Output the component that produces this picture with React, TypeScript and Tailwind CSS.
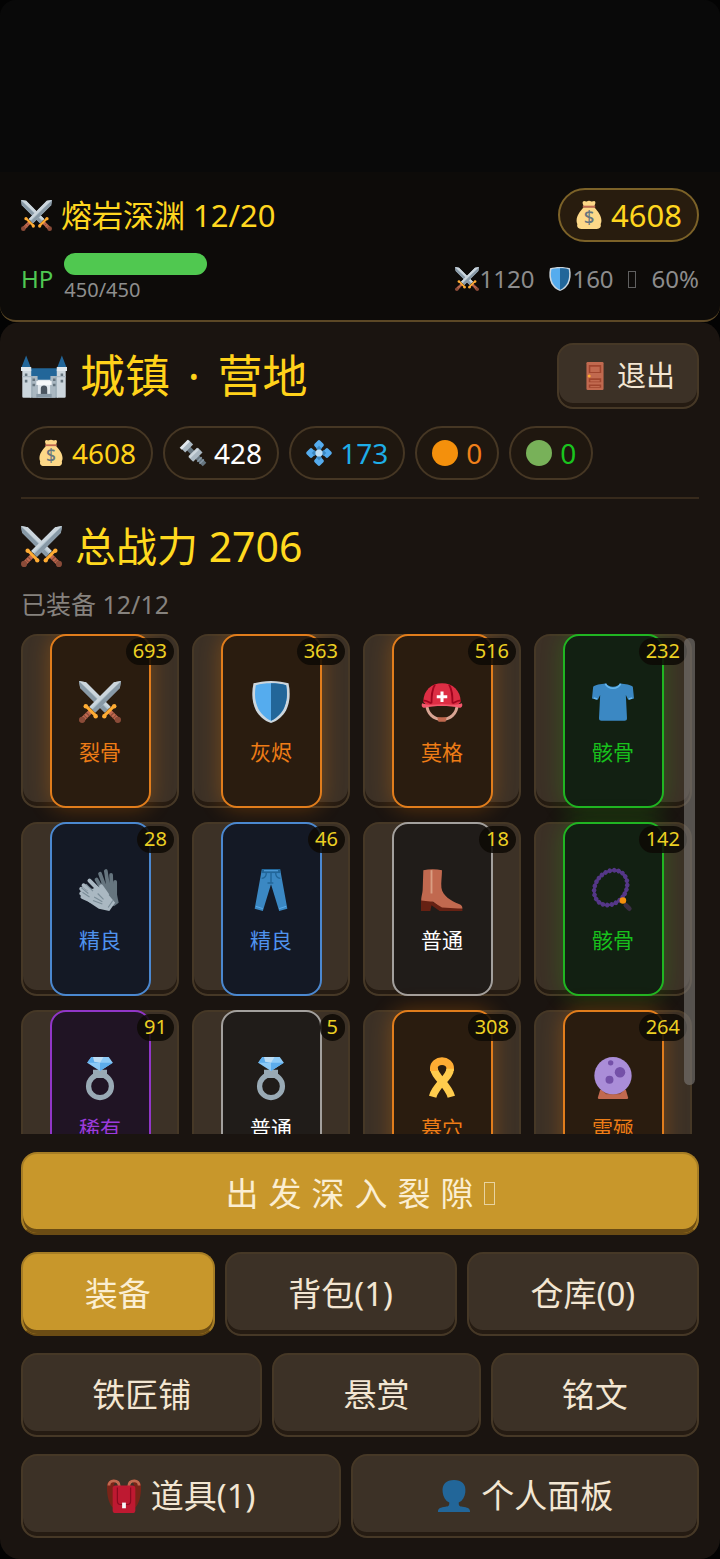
import React from 'react'
import clsx from 'clsx'

type IconName =
  | 'swords' | 'bag' | 'shield' | 'castle' | 'door' | 'bolt' | 'gem' | 'orange' | 'green'
  | 'helmet' | 'shirt' | 'gloves' | 'jeans' | 'boot' | 'beads' | 'ring' | 'ribbon' | 'crystal'
  | 'backpack' | 'person'

const sword = (
  <>
    <path fill="#B5C7D1" d="M36 0l-6 1L9 22l5 5L35 6z" />
    <path fill="#8899A6" d="M36 0L11.500 24.500 14 27 35 6z" />
    <path fill="#CCD6DD" d="M36 0l-6 1-21 21 1.500 1.500z" />
    <path stroke="#C1694F" strokeWidth="4" d="M10 26l-6.500 6.500" />
    <path stroke="#8A4B38" strokeWidth="1" d="M6 27l3 3M4 29l3 3" />
    <circle cx="2.700" cy="33.300" r="2.700" fill="#8A4B38" />
    <path stroke="#FFAC33" strokeWidth="2.600" strokeLinecap="round" d="M6.500 22l7.500 7.500" />
    <circle cx="5.800" cy="21.700" r="1.900" fill="#FFAC33" />
    <circle cx="14.300" cy="30.200" r="1.900" fill="#FFAC33" />
  </>
)

const ring = (
  <>
    <circle cx="18" cy="25" r="9.800" fill="none" stroke="#99AAB5" strokeWidth="4.500" />
    <path fill="#99AAB5" d="M12 11h12v4l-2 3h-8l-2-3z" />
    <path fill="#8CCAF7" d="M10.500 0h15L29 5 18 12 7 5z" />
    <path fill="#5DADEC" d="M10.500 0L7 5h11V0zM18 5v7l11-7z" />
    <path fill="#BDDDF4" d="M12 0h9l-3 5-5-1z" />
  </>
)

const petal = (
  <>
    <rect x="12.500" y="1.500" width="11" height="11" rx="2.500" fill="#55ACEE" transform="rotate(45 18 7)" />
    <path fill="#3B88C3" d="M18 8l4 4-4 4-4-4z" />
  </>
)

const glyphs: Record<IconName, React.ReactNode> = {
  swords: (
    <>
      <g transform="matrix(-1 0 0 1 36 0)">{sword}</g>
      {sword}
    </>
  ),
  bag: (
    <>
      <path fill="#FDD888" d="M11 8h14c1 2 9 9 9 17 0 3-1 4-1 5 1 3-1 6-5 6H8c-4 0-6-3-5-6 0-1-1-2-1-5C2 17 10 10 11 8z" />
      <path fill="#FDD888" d="M10 1c2-2 3 0 5-.500 2-1 4-1 6 0C23 1 25-1 26 1c1 2-1 4-1 6H11c0-2-2-4-1-6z" />
      <path fill="#BF6952" d="M10 6h16v2.500H10z" />
      <text x="18" y="30" textAnchor="middle" fontSize="24" fontWeight="500" fill="#67757F" fontFamily="Noto Sans, sans-serif">$</text>
    </>
  ),
  shield: (
    <>
      <path fill="#CCD6DD" d="M18 0c6 0 11 1 15 2 2 9 1 17-2 23-3 5-7 9-13 11C12 34 8 30 5 25 2 19 1 11 3 2 7 1 12 0 18 0z" />
      <path fill="#55ACEE" d="M18 2c5 0 9 .500 13 1.600 1.500 8 .500 14-2 20C26.500 28 23 32 18 34 13 32 9.500 28 7 23.600 4.500 18 3.500 12 5 3.600 9 2.500 13 2 18 2z" />
      <path fill="#226699" d="M18 2c5 0 9 .500 13 1.600 1.500 8 .500 14-2 20C26.500 28 23 32 18 34z" />
    </>
  ),
  castle: (
    <>
      <path fill="#99AAB5" d="M7 14h22v21H7z" />
      <path fill="#226699" d="M7 12h22l1 6H6z" />
      <path fill="#CCD6DD" d="M1 13h7v22H2a1 1 0 0 1-1-1zM28 13h7v21a1 1 0 0 1-1 1h-6z" />
      <path fill="#E1E8ED" d="M0 11h8v3H0zM28 11h8v3h-8zM13 20h10v15H13z" />
      <path fill="#AAB8C2" d="M1 18h7v1H1zM28 18h7v1h-7zM9 18h4v17H9zM23 18h4v17h-4z" />
      <path fill="#226699" d="M4 2l3.500 9h-7zM32 2l3.500 9h-7zM13 18h10v3H13z" />
      <path fill="#F5F8FA" d="M12 22h12v3H12z" />
      <path fill="#66757F" d="M3 16h2v2H3zM3 21h2v2H3zM31 16h2v2h-2zM31 21h2v2h-2zM9 20h2v2H9zM25 20h2v2h-2zM9 24h2v2H9zM25 24h2v2h-2z" />
      <path fill="#4a5560" d="M15.500 33v-5a2.500 2.500 0 0 1 5 0v5z" />
      <path fill="#8899A6" d="M12 32h12v3H12z" />
    </>
  ),
  door: (
    <>
      <rect x="7" y="0" width="22" height="36" rx="1.500" fill="#C1694F" />
      <path fill="#A0452E" d="M10 4h16v10H10zM10 21h16v5H10zM10 29h16v4H10z" />
      <path fill="#C1694F" d="M12 6h12v7H12zM12 23h12v2H12zM12 31h12v1H12z" />
      <circle cx="10.500" cy="18" r="2" fill="#FFAC33" />
    </>
  ),
  bolt: (
    <>
      <path stroke="#66757F" strokeWidth="7" d="M8 8l26 26" />
      <path stroke="#8899A6" strokeWidth="2" d="M24 30l6-6M27 33l6-6M20 26l5-5" />
      <path stroke="#AAB8C2" strokeWidth="9" strokeLinejoin="round" d="M4 14L15 3" />
      <path stroke="#E1E8ED" strokeWidth="4" d="M1 12L12 1" />
      <path stroke="#AAB8C2" strokeWidth="9" d="M15 27l13-13" />
      <path stroke="#CCD6DD" strokeWidth="4" d="M13 24l12-12" />
    </>
  ),
  gem: (
    <>
      {petal}
      <g transform="rotate(90 18 18)">{petal}</g>
      <g transform="rotate(180 18 18)">{petal}</g>
      <g transform="rotate(270 18 18)">{petal}</g>
      <circle cx="18" cy="18" r="5" fill="#BDDDF4" />
    </>
  ),
  orange: <circle cx="18" cy="18" r="18" fill="#F4900C" />,
  green: <circle cx="18" cy="18" r="18" fill="#78B159" />,
  helmet: (
    <>
      <path fill="none" stroke="#D8A493" strokeWidth="2.500" d="M5 20c0 8 6 13 13 13s13-5 13-13" />
      <path fill="#C1694F" d="M14 31h8l-1 4h-6z" />
      <path fill="#DD2E44" d="M2 18C2 8 9 2 18 2s16 6 16 16l-3 3H5z" />
      <path fill="none" stroke="#A0041E" strokeWidth="1.500" d="M12 3c-3 5-3 10-3 16M24 3c3 5 3 10 3 16M2 17c3-1 5 2 7 2M34 17c-3-1-5 2-7 2" />
      <path fill="#F4576C" d="M1 19c5 2 11 1 17 1s12 1 17-1c1 2 0 4-2 4-9-2-21-2-30 0-2 0-3-2-2-4z" />
      <path stroke="#fff" strokeWidth="2.600" d="M18 9v9M13.500 13.500h9" />
    </>
  ),
  shirt: (
    <>
      <path fill="#3B88C3" d="M12 2c2 4 10 4 12 0 5 1 9 1 11 3l1 10-5 1-2-4 1 20c0 2-1 2-2 2H8c-1 0-2 0-2-2l1-20-2 4-5-1L1 5c2-2 6-2 11-3z" />
      <path fill="none" stroke="#66B7EE" strokeWidth="1.400" d="M11.500 2.500c2.500 5 10.500 5 13 0M1.500 14.500l3 1M34.500 14.500l-3 1" />
    </>
  ),
  gloves: (
    <>
      <path fill="#66757F" d="M16 12l10 1 6 6 2 10-4 3-9-6z" />
      <path stroke="#66757F" strokeWidth="3.200" strokeLinecap="round" d="M19 16l-4-7M22 15L18 4M25 15L23 1.700M28 18l-.500-13M31 23V11" />
      <path fill="#AAB8C2" d="M5 20l11-5 10 8 5 6-5 7-9-2-9-6z" />
      <path stroke="#AAB8C2" strokeWidth="3.500" strokeLinecap="round" d="M12 20l-8-6M10 23l-8-6M10 26l-8-5M12 28l-9-4M17 18l-8-8M24 22l-5-7" />
      <path stroke="#7B8D98" d="M8 21l-6-5M9 24l-6-4M12 19l-6-6M12 27l8 3M13 24l7 4M16 21l5 5M25 33l4-6" />
    </>
  ),
  jeans: (
    <>
      <path fill="#3B88C3" d="M10 1h16l6 33-7 2-7-23-7 23-7-2z" />
      <path fill="#226699" d="M10 0h16v3.500H10z" />
      <path fill="none" stroke="#226699" strokeWidth="1.200" d="M18 3v9M10 8c3 0 4-2 4-5M26 8c-3 0-4-2-4-5M15 12h5" />
      <path stroke="#5DADEC" strokeWidth=".8" d="M5 32l6 2M31 32l-6 2M12 1.500h12" />
    </>
  ),
  boot: (
    <>
      <path fill="#C1694F" d="M2 1c5-1 11-1 16 0 0 5-1 11-.500 15 1 7 8 11 15 14 3 1 3 3 3 4l-17 1-8-7-10 1c-1-5 1-7 1-13z" />
      <path fill="#662113" d="M0 27l10 1 8 5 17.500 1v2H16l-7-5-1 5H0z" />
      <path stroke="#D99E82" strokeWidth="1.600" d="M9 1v20" />
    </>
  ),
  beads: (
    <>
      <ellipse cx="16" cy="16" rx="13" ry="16" transform="rotate(38 16 16)" fill="none" stroke="#553788" strokeWidth="4" strokeLinecap="round" strokeDasharray="0 3.800" />
      <ellipse cx="16" cy="16" rx="13" ry="16" transform="rotate(38 16 16)" fill="none" stroke="#553788" strokeWidth="2" />
      <path stroke="#3A2E45" strokeWidth="4" strokeLinecap="round" d="M29 31l3 3" />
      <circle cx="26.500" cy="27" r="2.800" fill="#F4900C" />
    </>
  ),
  ring,
  ribbon: (
    <>
      <path stroke="#FFCC4D" strokeWidth="6.500" d="M11 9c0 8 12 14 15 25" />
      <path stroke="#FFAC33" strokeWidth="6.500" d="M11 12V9.500a7 6 0 0 1 14 0V12" />
      <path stroke="#FFCC4D" strokeWidth="6.500" d="M25 10c0 8-12 13-15 24" />
    </>
  ),
  crystal: (
    <>
      <path fill="#C1694F" d="M7 28h22l2 7c0 1-1 1-1 1H6s-1 0-1-1z" />
      <path fill="#8A4B38" d="M8 28h20l-4 4H12z" />
      <circle cx="18" cy="16" r="16" fill="#AA8DD8" />
      <circle cx="24" cy="13" r="4.500" fill="#7450A8" />
      <circle cx="15" cy="19.500" r="3.400" fill="#7450A8" />
      <circle cx="16" cy="5" r="2.300" fill="#7450A8" />
    </>
  ),
  backpack: (
    <>
      <path fill="#7A2418" d="M9 1C3 0 0 3 0 9c0 9 2 18 7 22V8zM27 1c6-1 9 2 9 8 0 9-2 18-7 22V8z" />
      <path fill="none" stroke="#C1694F" strokeWidth="3" d="M13 8c0-4-2-6-6-6-3 0-5 2-5 5M23 8c0-4 2-6 6-6 3 0 5 2 5 5" />
      <path fill="#BE1931" d="M9 7h18c2 0 3 1 3 3v23c0 2-1 3-3 3H9c-2 0-3-1-3-3V10c0-2 1-3 3-3z" />
      <path fill="none" stroke="#8C0A20" strokeWidth="1.300" d="M11 9v14c0 3 1 4 3 4h8c2 0 3-1 3-4V9" />
      <path fill="#F5F8FA" d="M16 25h4v6h-4z" />
    </>
  ),
  person: (
    <path fill="#226699" d="M18 1c8 0 13 4 12 13-.500 5-3 9-7 11 0 4 1 4 4 4.500 5 1 8 1 8 5.500H1c0-4.500 3-4.500 8-5.500 3-.500 4-.500 4-4.500-4-2-6.500-6-7-11C5 5 10 1 18 1z" />
  ),
}

function Icon({ name, className }: { name: IconName; className: string }) {
  return (
    <svg viewBox="0 0 36 36" fill="none" aria-hidden="true" className={clsx('shrink-0 overflow-visible', className)}>
      {glyphs[name]}
    </svg>
  )
}

type Rarity = 'orange' | 'green' | 'blue' | 'purple' | 'white'

const rarityStyles: Record<Rarity, string> = {
  orange: 'border-[#e17d1c] bg-[#2a1c0f] text-[#ee7c16] shadow-[0_0_22px_rgba(255,128,0,0.3)]',
  green: 'border-[#20b522] bg-[#122012] text-[#18c01c] shadow-[0_0_22px_rgba(30,200,0,0.25)]',
  blue: 'border-[#4b88d0] bg-[#141925] text-[#4f93ee]',
  purple: 'border-[#9136c8] bg-[#201424] text-[#9c3bdc]',
  white: 'border-[#a3a09d] bg-[#201c19] text-white',
}

const equipment: { icon: IconName; label: string; power: number; rarity: Rarity }[] = [
  { icon: 'swords', label: '裂骨', power: 693, rarity: 'orange' },
  { icon: 'shield', label: '灰烬', power: 363, rarity: 'orange' },
  { icon: 'helmet', label: '莫格', power: 516, rarity: 'orange' },
  { icon: 'shirt', label: '骸骨', power: 232, rarity: 'green' },
  { icon: 'gloves', label: '精良', power: 28, rarity: 'blue' },
  { icon: 'jeans', label: '精良', power: 46, rarity: 'blue' },
  { icon: 'boot', label: '普通', power: 18, rarity: 'white' },
  { icon: 'beads', label: '骸骨', power: 142, rarity: 'green' },
  { icon: 'ring', label: '稀有', power: 91, rarity: 'purple' },
  { icon: 'ring', label: '普通', power: 5, rarity: 'white' },
  { icon: 'ribbon', label: '墓穴', power: 308, rarity: 'orange' },
  { icon: 'crystal', label: '雷殛', power: 264, rarity: 'orange' },
]

const currencies: { icon: IconName; amount: number; color: string }[] = [
  { icon: 'bag', amount: 4608, color: 'text-[#ffd21a]' },
  { icon: 'bolt', amount: 428, color: 'text-white' },
  { icon: 'gem', amount: 173, color: 'text-[#1eaee8]' },
  { icon: 'orange', amount: 0, color: 'text-[#f0801a]' },
  { icon: 'green', amount: 0, color: 'text-[#1ac41e]' },
]

const menuRows: { label: string; icon?: IconName; active?: boolean }[][] = [
  [{ label: '装备', active: true }, { label: '背包(1)' }, { label: '仓库(0)' }],
  [{ label: '铁匠铺' }, { label: '悬赏' }, { label: '铭文' }],
  [{ label: '道具(1)', icon: 'backpack' }, { label: '个人面板', icon: 'person' }],
]

const darkButton = 'border-2 border-[#463826] bg-[#3c3126] text-[#f3e6d2] shadow-[inset_0_-4px_0_#251b12]'
const goldButton = 'border-2 border-[#a67d25] border-b-[#6b4c14] bg-[#c8972b] text-[#fbeed2] shadow-[inset_0_-4px_0_#6b4c14]'

function EmptyGlyph({ className }: { className: string }) {
  return <span aria-hidden="true" className={clsx('inline-block border', className)} />
}

function Slot({ icon, label, power, rarity }: (typeof equipment)[number]) {
  return (
    <button type="button" className={clsx('relative flex h-[174px] justify-center rounded-[16px]', darkButton)}>
      <span
        className={clsx(
          '-my-[2px] flex w-[101px] flex-col items-center justify-center gap-3 self-stretch rounded-[16px] border-2 pt-2',
          rarityStyles[rarity],
        )}
      >
        <Icon name={icon} className="size-[42px]" />
        <span className="text-[21px] leading-[34px]">{label}</span>
      </span>
      <span className="absolute top-[2px] right-[3px] h-[27px] rounded-full bg-[#0d0905]/85 px-[7px] text-[20px] leading-[26px] text-[#ecd023]">
        {power}
      </span>
    </button>
  )
}

export default function App() {
  return (
    <div className="flex h-screen flex-col bg-[#030303] font-['Noto_Sans','Noto_Sans_CJK_SC',sans-serif] font-normal">
      <header className="rounded-[16px] border-b-2 border-[#5c4826] bg-[linear-gradient(#090909_172px,#0d0b09_172px)] px-[21px] pt-[188px] pb-[15px]">
        <div className="flex items-center justify-between">
          <div className="flex items-center gap-[9px] text-[31px] leading-[54px] text-[#ffd61f]">
            <Icon name="swords" className="size-[31px]" />
            <span>熔岩深渊 12/20</span>
          </div>
          <div className="flex h-[54px] items-center gap-2 rounded-full border-2 border-[#7c6228] bg-[#281c0e] px-[15px] text-[31px] text-[#ffd61f]">
            <Icon name="bag" className="size-[28px]" />
            <span>4608</span>
          </div>
        </div>
        <div className="mt-[11px] flex items-center justify-between">
          <div className="flex items-center gap-[11px]">
            <span className="text-[24px] text-[#4fc752]">HP</span>
            <div>
              <div className="h-[22px] w-[143px] rounded-full bg-[#50c850]" />
              <div className="text-[20px] leading-[30px] text-[#8e8e8e]">450/450</div>
            </div>
          </div>
          <div className="flex items-center gap-[14px] text-[24px] text-[#8c8c8c]">
            <span className="flex items-center"><Icon name="swords" className="size-[24px]" />1120</span>
            <span className="flex items-center"><Icon name="shield" className="size-[24px]" />160</span>
            <span className="flex items-center gap-[16px]"><EmptyGlyph className="h-[17px] w-[8px] border-[#606060]" />60%</span>
          </div>
        </div>
      </header>

      <main className="flex min-h-0 flex-1 flex-col rounded-[20px] bg-[#1a1410] p-[21px]">
        <div className="flex items-center justify-between">
          <h1 className="flex items-center gap-[13px] text-[45px] leading-[66px] text-[#ffd21a]">
            <Icon name="castle" className="size-[46px]" />
            <span>城镇 <span className="mx-[6px]">·</span> 营地</span>
          </h1>
          <button type="button" className={clsx('flex h-[66px] items-center gap-2 rounded-[16px] px-[22px] text-[29px]', darkButton)}>
            <Icon name="door" className="size-[28px]" />
            退出
          </button>
        </div>

        <div className="mt-[17px] flex gap-[10px] border-b-2 border-[#372a1c] pb-[17px]">
          {currencies.map(({ icon, amount, color }) => (
            <div key={icon} className="flex h-[54px] items-center gap-2 rounded-full border-2 border-[#463724] bg-[#1f170f] px-[15px] text-[28px]">
              <Icon name={icon} className="size-[26px]" />
              <span className={color}>{amount}</span>
            </div>
          ))}
        </div>

        <h2 className="mt-[17px] flex items-center gap-[13px] text-[41px] leading-[60px] text-[#ffd91f]">
          <Icon name="swords" className="size-[41px]" />
          总战力 2706
        </h2>
        <p className="mt-[9px] text-[25px] leading-[38px] text-[#86827e]">已装备 12/12</p>

        <section className="relative mt-[11px] mb-[18px] min-h-0 flex-1">
          <div className="h-full overflow-y-auto [scrollbar-width:none]">
            <div className="grid grid-cols-4 gap-x-[13px] gap-y-[14px] pr-[7px]">
              {equipment.map((item, i) => (
                <Slot key={i} {...item} />
              ))}
            </div>
          </div>
          <div className="absolute top-1 right-1 h-[447px] w-[11px] rounded-full bg-[#777370]/65" />
        </section>

        <div className="flex flex-col gap-[17px] text-[33px]">
          <button type="button" className={clsx('flex h-[83px] items-center justify-center rounded-[16px]', goldButton)}>
            <span className="tracking-[10px]">出发深入裂隙</span>
            <EmptyGlyph className="h-[23px] w-[11px] border-[#e8d3a0]" />
          </button>
          {menuRows.map((row, i) => (
            <nav key={i} className="flex gap-[10px]">
              {row.map(({ label, icon, active }) => (
                <button
                  key={label}
                  type="button"
                  className={clsx(
                    'flex h-[84px] flex-auto items-center justify-center gap-[10px] rounded-[16px]',
                    active ? goldButton : darkButton,
                  )}
                >
                  {icon && <Icon name={icon} className="size-[34px]" />}
                  {label}
                </button>
              ))}
            </nav>
          ))}
        </div>
      </main>
    </div>
  )
}
